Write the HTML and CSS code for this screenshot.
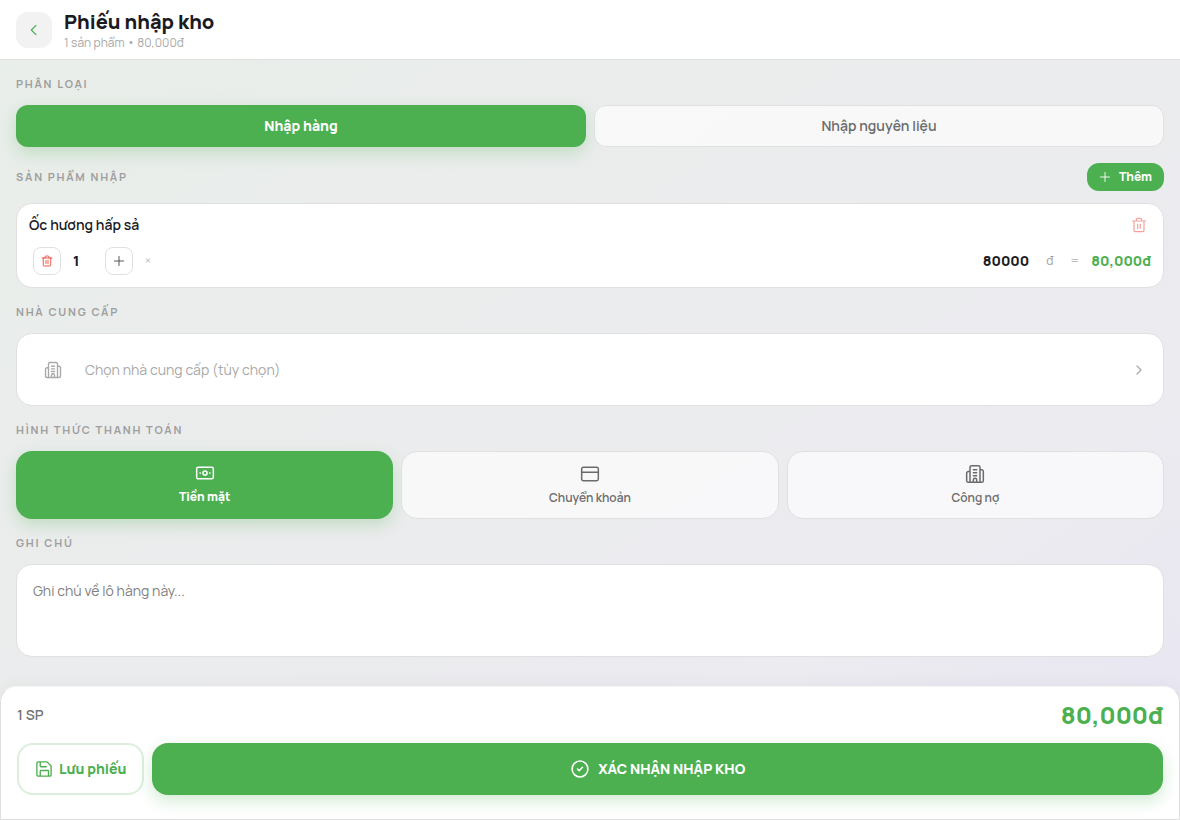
FILE: index.html
```html
<!DOCTYPE html>
<html lang="vi">
<head>
<meta charset="utf-8">
<meta name="viewport" content="width=device-width, initial-scale=1">
<title>Phiếu nhập kho</title>
<link rel="stylesheet" href="styles.css">
</head>
<body>
<svg class="sprite" aria-hidden="true">
  <symbol id="trash" viewBox="0 0 24 24"><path d="M2 6h20M8 6V4a2 2 0 0 1 2-2h4a2 2 0 0 1 2 2v2M4.500 6v14a2 2 0 0 0 2 2h11a2 2 0 0 0 2-2V6M10 11v6M14 11v6"/></symbol>
  <symbol id="building" viewBox="0 0 24 24"><path d="M6 22V4a2 2 0 0 1 2-2h8a2 2 0 0 1 2 2v18M6 9H4a2 2 0 0 0-2 2v9a2 2 0 0 0 2 2h16a2 2 0 0 0 2-2V9a2 2 0 0 0-2-2h-2M10 7h4M10 10.500h4M10 14h4M10 22v-3a2 2 0 0 1 4 0v3"/></symbol>
  <symbol id="plus" viewBox="0 0 24 24"><path d="M3 12h18M12 3v18"/></symbol>
</svg>
<div class="page">
  <header class="header">
    <button class="back" type="button" aria-label="Quay lại"><svg class="icon icon-16" viewBox="0 0 24 24"><path d="m15 19-7-7 7-7"/></svg></button>
    <div>
      <h1 class="title">Phiếu nhập kho</h1>
      <p class="subtitle">1 sản phẩm • 80,000đ</p>
    </div>
  </header>

  <main class="content">
    <section class="section">
      <h2 class="label">PHÂN LOẠI</h2>
      <div class="tabs">
        <button class="option tab active" type="button">Nhập hàng</button>
        <button class="option tab" type="button">Nhập nguyên liệu</button>
      </div>
    </section>

    <section class="section">
      <div class="section-head">
        <h2 class="label">SẢN PHẨM NHẬP</h2>
        <button class="add" type="button"><svg class="icon icon-12"><use href="#plus"/></svg>Thêm</button>
      </div>
      <article class="card product">
        <div class="product-row">
          <h3 class="product-name">Ốc hương hấp sả</h3>
          <button class="remove" type="button" aria-label="Xóa sản phẩm"><svg class="icon icon-16"><use href="#trash"/></svg></button>
        </div>
        <div class="product-row">
          <div class="quantity">
            <button class="step danger" type="button" aria-label="Giảm"><svg class="icon icon-12"><use href="#trash"/></svg></button>
            <input class="number count" type="text" value="1" aria-label="Số lượng">
            <button class="step" type="button" aria-label="Tăng"><svg class="icon icon-12"><use href="#plus"/></svg></button>
            <span class="sign">×</span>
          </div>
          <div class="amount">
            <input class="number price" type="text" value="80000" aria-label="Đơn giá">
            <span class="unit">đ</span>
            <span class="sign">=</span>
            <strong class="line-total">80,000đ</strong>
          </div>
        </div>
      </article>
    </section>

    <section class="section">
      <h2 class="label">NHÀ CUNG CẤP</h2>
      <button class="card supplier" type="button">
        <svg class="icon icon-18"><use href="#building"/></svg>
        <span class="supplier-text">Chọn nhà cung cấp (tùy chọn)</span>
        <svg class="icon icon-16" viewBox="0 0 24 24"><path d="m9 6 6 6-6 6"/></svg>
      </button>
    </section>

    <section class="section">
      <h2 class="label">HÌNH THỨC THANH TOÁN</h2>
      <div class="methods">
        <button class="option method active" type="button"><svg class="icon icon-20" viewBox="0 0 24 24"><rect x="2" y="5" width="20" height="14" rx="2"/><circle cx="12" cy="12" r="2.5"/><path d="M6 12h.5M17.500 12h.5"/></svg>Tiền mặt</button>
        <button class="option method" type="button"><svg class="icon icon-20" viewBox="0 0 24 24"><rect x="2" y="4" width="20" height="16" rx="2"/><path d="M2 10h20"/></svg>Chuyển khoản</button>
        <button class="option method" type="button"><svg class="icon icon-20"><use href="#building"/></svg>Công nợ</button>
      </div>
    </section>

    <section class="section">
      <label class="label" for="note">GHI CHÚ</label>
      <textarea class="card note" id="note" placeholder="Ghi chú về lô hàng này..."></textarea>
    </section>
  </main>

  <footer class="footer">
    <div class="summary">
      <span class="summary-count">1 SP</span>
      <strong class="summary-total">80,000đ</strong>
    </div>
    <div class="actions">
      <button class="save" type="button"><svg class="icon icon-18" viewBox="0 0 24 24"><path d="M16 2.500 21.500 8v11.500a2 2 0 0 1-2 2h-15a2 2 0 0 1-2-2v-15a2 2 0 0 1 2-2ZM18 21.500V15a1 1 0 0 0-1-1H8a1 1 0 0 0-1 1v6.500M7 2.500V8a1 1 0 0 0 1 1h7"/></svg>Lưu phiếu</button>
      <button class="confirm" type="button"><svg class="icon icon-20" viewBox="0 0 24 24"><circle cx="12" cy="12" r="9.500"/><path d="m9 12 2 2 4-4"/></svg>XÁC NHẬN NHẬP KHO</button>
    </div>
  </footer>
</div>
</body>
</html>
```
FILE: styles.css
```css
:root {
  --green: #4caf50;
  --line: #e0e0e0;
  --muted: #9e9e9e;
  --text: #1a1a1f;
}

* { box-sizing: border-box; }

body {
  margin: 0;
  color: var(--text);
  font-family: Manrope, Inter, "Noto Sans", sans-serif;
}

h1, h2, h3, p { margin: 0; }

button, input, textarea { font: inherit; color: inherit; }

button {
  display: flex;
  align-items: center;
  justify-content: center;
  padding: 0;
  border: 0;
  background: none;
  cursor: pointer;
}

.sprite { display: none; }

.icon {
  flex: none;
  fill: none;
  stroke: currentColor;
  stroke-width: 1.8;
  stroke-linecap: round;
  stroke-linejoin: round;
}

.icon-12 { width: 12px; height: 12px; }
.icon-16 { width: 16px; height: 16px; }
.icon-18 { width: 18px; height: 18px; }
.icon-20 { width: 20px; height: 20px; }

.page {
  display: flex;
  flex-direction: column;
  min-height: 100vh;
  background: linear-gradient(145deg, #e8eee9 0%, #ebeced 45%, #ebebf0 74%, #e8e5f2 100%);
}

.header {
  display: flex;
  align-items: center;
  gap: 12px;
  padding: 8px 16px;
  border-bottom: 1px solid var(--line);
  background: #fff;
}

.back {
  width: 36px;
  height: 36px;
  border-radius: 12px;
  background: #f2f2f2;
  color: var(--green);
}

.title { font-size: 20px; line-height: 27px; font-weight: 800; }
.subtitle { font-size: 12px; line-height: 16px; font-weight: 400; color: #a8a8a8; }

.content {
  flex: 1;
  display: flex;
  flex-direction: column;
  gap: 16px;
  padding: 16px;
}

.section { display: flex; flex-direction: column; gap: 12px; }

.label {
  padding-bottom: 1px;
  color: var(--muted);
  font-size: 11px;
  line-height: 16px;
  font-weight: 700;
  letter-spacing: 0.16em;
}

.tabs, .methods { display: grid; gap: 8px; }
.tabs { grid-template-columns: repeat(2, 1fr); }
.methods { grid-template-columns: repeat(3, 1fr); }

.option {
  border: 1px solid var(--line);
  background: rgba(255, 255, 255, 0.65);
  color: #6b6b6b;
  font-weight: 600;
}

.option.active {
  border: 0;
  background: var(--green);
  color: #fff;
  font-weight: 800;
  box-shadow: 0 6px 16px rgba(76, 175, 80, 0.25);
}

.tab { height: 42px; border-radius: 12px; font-size: 14px; line-height: 20px; }

.method {
  flex-direction: column;
  justify-content: flex-start;
  gap: 6px;
  height: 68px;
  padding: 12px;
  border-radius: 16px;
  font-size: 12px;
  line-height: 16px;
}

.section-head { display: flex; align-items: center; justify-content: space-between; }

.add {
  gap: 8px;
  height: 28px;
  padding: 0 12px;
  border-radius: 12px;
  background: var(--green);
  color: #fff;
  font-size: 12px;
  line-height: 16px;
  font-weight: 800;
}

.card { border: 1px solid var(--line); border-radius: 16px; background: #fff; }

.product {
  display: flex;
  flex-direction: column;
  gap: 12px;
  padding: 11px 12px 12px;
}

.product-row { display: flex; align-items: center; justify-content: space-between; }
.product-name { font-size: 14px; line-height: 20px; font-weight: 600; }
.remove { width: 24px; height: 20px; color: #f2a19b; }

.quantity, .amount { display: flex; align-items: center; line-height: 20px; }
.quantity { padding-left: 4px; }

.step {
  width: 28px;
  height: 28px;
  border: 1px solid var(--line);
  border-radius: 8px;
  color: #444;
}

.danger { color: #f44336; }

.number {
  height: 20px;
  padding: 0;
  border: 0;
  background: none;
  font-size: 14px;
  font-weight: 800;
}

.count { width: 24px; margin: 0 8px 0 12px; }
.quantity .sign { margin-left: 12px; }
.price { width: 80px; text-align: right; }
.unit { margin: 0 17px; color: var(--muted); font-size: 12px; }
.sign { color: #bdbdbd; font-size: 12px; }
.line-total { margin-left: 12px; color: var(--green); font-size: 14px; font-weight: 800; }

.supplier {
  gap: 23px;
  height: 73px;
  padding: 0 16px 0 27px;
  color: #a8a8a8;
  font-size: 14px;
  line-height: 20px;
  text-align: left;
}

.supplier-text { flex: 1; font-weight: 400; }

.note {
  display: block;
  width: 100%;
  height: 93px;
  padding: 16px;
  font-size: 14px;
  line-height: 20px;
  font-weight: 400;
  resize: none;
}

.note::placeholder { color: #808080; }

.footer {
  display: flex;
  flex-direction: column;
  gap: 12px;
  padding: 12px 16px 24px;
  border: 1px solid var(--line);
  border-top-color: #f4f4f4;
  border-radius: 16px 16px 0 0;
  background: #fff;
  box-shadow: 0 -4px 16px rgba(0, 0, 0, 0.03);
}

.summary { display: flex; align-items: center; justify-content: space-between; }
.summary-count { color: #757575; font-size: 14px; line-height: 20px; font-weight: 600; }
.summary-total { color: var(--green); font-size: 24px; line-height: 32px; font-weight: 800; }

.actions { display: flex; gap: 8px; }

.save, .confirm {
  height: 52px;
  border-radius: 16px;
  font-size: 14px;
  line-height: 20px;
  font-weight: 800;
}

.save {
  gap: 6px;
  padding: 0 16px;
  border: 2px solid #dbefdc;
  color: var(--green);
}

.confirm {
  flex: 1;
  gap: 8px;
  background: var(--green);
  color: #fff;
  box-shadow: 0 6px 16px rgba(76, 175, 80, 0.25);
}
```
